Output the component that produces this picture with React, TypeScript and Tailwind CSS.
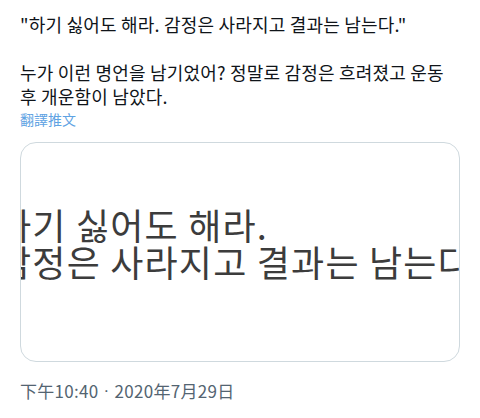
export default function App() {
  return (
    <div className="w-[480px] h-[418px] bg-white px-5 pt-3 overflow-hidden font-['Noto_Sans_CJK_KR','Noto_Sans_CJK_SC',sans-serif]">
      <div className="text-[18px] leading-[24px] text-[#0f1419] tracking-[0.2px]">
        <p>"하기 싫어도 해라. 감정은 사라지고 결과는 남는다."</p>
        <p className="h-[24px]"></p>
        <p>
          누가 이런 명언을 남기었어? 정말로 감정은 흐려졌고 운동
          <br />후 개운함이 남았다.
        </p>
      </div>
      <div className="mt-[1px] text-[14px] leading-[20px] text-[#5fa3e3] font-['Noto_Sans_CJK_TC',sans-serif]">
        翻譯推文
      </div>

      <div className="mt-[13px] h-[220px] rounded-[16px] border border-[#cfd9de] overflow-hidden bg-white">
        <div className="pt-[63px] ml-[-23px] whitespace-nowrap text-[36px] leading-[37px] tracking-[1.2px] text-[#3c3c3c]">
          <p>하기 싫어도 해라.</p>
          <p>감정은 사라지고 결과는 남는다</p>
        </div>
      </div>

      <div className="mt-[19px] flex items-center text-[17px] leading-[20px] text-[#536471] tracking-[0.3px] font-['Noto_Sans_CJK_TC',sans-serif]">
        <span>下午10:40</span>
        <span className="px-[5px] font-['Liberation_Sans',sans-serif]">·</span>
        <span>2020年7月29日</span>
      </div>
    </div>
  );
}
